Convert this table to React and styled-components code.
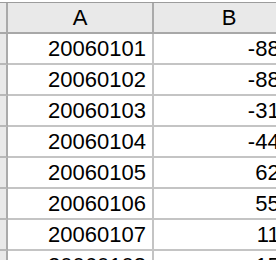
import { Fragment } from "react";
import styled, { createGlobalStyle } from "styled-components";

const GlobalStyle = createGlobalStyle`
    html, body {
        margin: 0;
        padding: 0;
        background: #ffffff;
        overflow: hidden;
    }
    body {
        font-family: "Liberation Sans", Arial, sans-serif;
    }
`;

const Sheet = styled.div`
    margin-top: 2px;
    border-top: 1px solid #9c9c9c;
    display: grid;
    grid-template-columns: 8px 146px 152px;
    grid-auto-rows: 31px;
    width: 306px;
`;

const Cell = styled.div`
    box-sizing: border-box;
    display: flex;
    align-items: center;
    justify-content: ${(p) => (p.$head ? "center" : "flex-end")};
    padding: 0 6px;
    font-size: 22px;
    color: #000;
    white-space: nowrap;
    background: ${(p) => (p.$head ? "#e9e9e9" : "#ffffff")};
    border-right: 2px solid ${(p) => (p.$head ? "#aaaaaa" : "#c4c4c4")};
    border-bottom: 2px solid ${(p) => (p.$head ? "#a8a8a8" : "#c4c4c4")};
`;

const Corner = styled.div`
    box-sizing: border-box;
    background: #e9e9e9;
    border-right: 2px solid #aaaaaa;
    border-bottom: 2px solid #a8a8a8;
`;

const RowHead = styled.div`
    box-sizing: border-box;
    background: #e9e9e9;
    border-right: 2px solid #aaaaaa;
    border-bottom: 2px solid #b8b8b8;
`;

const rows = [
    ["20060101", "-88.6"],
    ["20060102", "-88.4"],
    ["20060103", "-31.2"],
    ["20060104", "-44.1"],
    ["20060105", "62.4"],
    ["20060106", "55.3"],
    ["20060107", "11.7"],
    ["20060108", "15.2"],
];

const App = () => {
    return (
        <>
            <GlobalStyle />
            <Sheet>
                <Corner />
                <Cell $head>A</Cell>
                <Cell $head>B</Cell>
                {rows.map(([a, b]) => (
                    <Fragment key={a}>
                        <RowHead />
                        <Cell>{a}</Cell>
                        <Cell>{b}</Cell>
                    </Fragment>
                ))}
            </Sheet>
        </>
    );
};

export default App;
